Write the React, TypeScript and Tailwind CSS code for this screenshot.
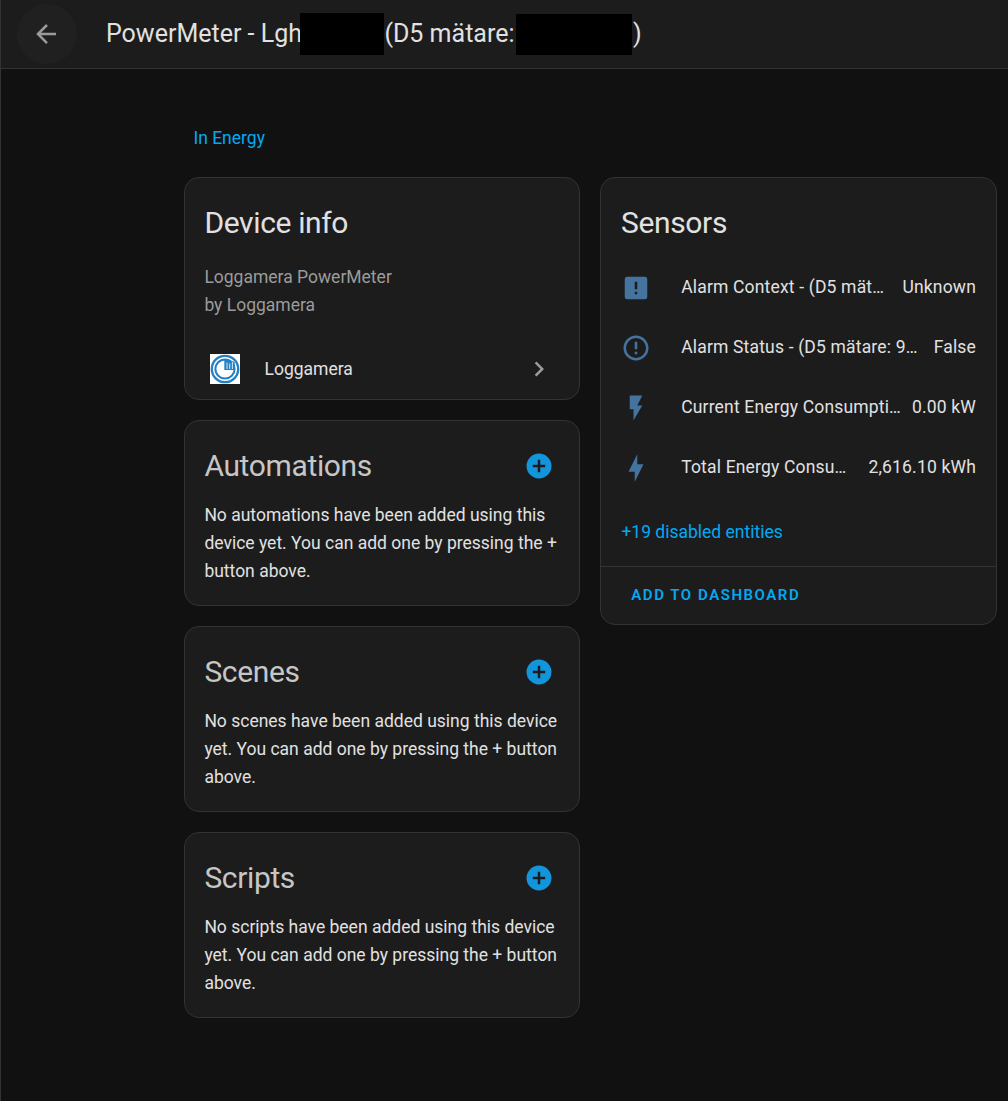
import type { ReactNode } from "react";

const icons = {
  back: "M20,11V13H8L13.5,18.5L12.08,19.92L4.16,12L12.08,4.08L13.5,5.5L8,11H20Z",
  chevron: "M8.59,16.58L13.17,12L8.59,7.41L10,6L16,12L10,18L8.59,16.58Z",
  plusCircle:
    "M17,13H13V17H11V13H7V11H11V7H13V11H17M12,2A10,10 0 0,0 2,12A10,10 0 0,0 12,22A10,10 0 0,0 22,12A10,10 0 0,0 12,2Z",
  alertBox:
    "M5,3H19A2,2 0 0,1 21,5V19A2,2 0 0,1 19,21H5A2,2 0 0,1 3,19V5A2,2 0 0,1 5,3M13,13V7H11V13H13M13,17V15H11V17H13Z",
  alertCircle:
    "M11,15H13V17H11V15M11,7H13V13H11V7M12,2C6.47,2 2,6.5 2,12A10,10 0 0,0 12,22A10,10 0 0,0 22,12A10,10 0 0,0 12,2M12,20A8,8 0 0,1 4,12A8,8 0 0,1 12,4A8,8 0 0,1 20,12A8,8 0 0,1 12,20Z",
  flash: "M7,2V13H10V22L17,10H13L17,2H7Z",
  bolt: "M11 15H6L13 1V9H18L11 23V15Z",
};

function Icon({ name, className }: { name: keyof typeof icons; className: string }) {
  return (
    <svg viewBox="0 0 24 24" className={`size-[30px] shrink-0 fill-current ${className}`}>
      <path d={icons[name]} />
    </svg>
  );
}

function LoggameraLogo() {
  return (
    <svg viewBox="0 0 30 30" className="size-[30px] shrink-0">
      <rect width="30" height="30" fill="#fff" />
      <circle cx="15" cy="15" r="13.2" fill="none" stroke="#2480c4" strokeWidth="2.3" />
      <circle cx="15" cy="15" r="9.6" fill="none" stroke="#2480c4" strokeWidth="2" />
      <path d="M14.3 5.2H17L24.6 8V16H14.3Z" fill="#2480c4" />
      <path d="M17 8.5V15M19.7 9.5V15M22.4 8V15" stroke="#d6e7f5" strokeWidth="1" />
    </svg>
  );
}

function Card({ children, className }: { children: ReactNode; className: string }) {
  return (
    <section className={`rounded-[15px] border border-[#333333] bg-[#1c1c1c] ${className}`}>
      {children}
    </section>
  );
}

function AddCard({ title, text }: { title: string; text: string }) {
  return (
    <Card className="h-[186px] pl-[19.4px] pr-5 pt-[25px]">
      <div className="flex h-10 items-center justify-between pr-[5px]">
        <h2 className="text-[30px] leading-10 tracking-[-0.012em] text-[#c6c6c6]">{title}</h2>
        <Icon name="plusCircle" className="text-[#1395db]" />
      </div>
      <p className="mt-[15px] text-[17.5px] leading-7">{text}</p>
    </Card>
  );
}

const sensors: { icon: keyof typeof icons; name: string; value: string }[] = [
  { icon: "alertBox", name: "Alarm Context - (D5 mät…", value: "Unknown" },
  { icon: "alertCircle", name: "Alarm Status - (D5 mätare: 9…", value: "False" },
  { icon: "flash", name: "Current Energy Consumpti…", value: "0.00 kW" },
  { icon: "bolt", name: "Total Energy Consu…", value: "2,616.10 kWh" },
];

export default function App() {
  return (
    <div className="h-[1101px] w-[1008px] overflow-hidden border-l border-[#333333] bg-[#111111] font-[Roboto,sans-serif] text-[#e1e1e1]">
      <header className="flex h-[69px] items-center border-b border-[#333333] bg-[#1c1c1c] pl-[15.5px]">
        <button className="flex size-[60px] items-center justify-center rounded-full bg-[#202020]">
          <Icon name="back" className="mr-[1.2px] text-[#9b9b9b]" />
        </button>
        <h1 className="ml-[29.5px] flex h-[69px] items-center whitespace-nowrap text-[25px] leading-[25px]">
          <span className="-mt-px w-[194px]">PowerMeter - Lgh</span>
          <span className="h-[42px] w-[84px] bg-black" />
          <span className="-mt-px w-[132px] pl-[0.4px]">(D5 mätare:</span>
          <span className="mt-px h-[41px] w-[116px] bg-black" />
          <span className="-mt-px pl-px">)</span>
        </h1>
      </header>

      <main className="pl-[183px]">
        <a className="ml-[9.4px] mt-[55px] block text-[17.5px] leading-7 text-[#03a9f4]">In Energy</a>
        <div className="mt-[25px] flex items-start gap-5">
          <div className="flex w-[396px] flex-col gap-5">
            <Card className="h-[223px] pl-[19.4px] pr-5 pt-[25px]">
              <h2 className="text-[30px] leading-10 tracking-[-0.012em]">Device info</h2>
              <p className="mt-5 text-[17.5px] leading-7 text-[#9b9b9b]">
                Loggamera PowerMeter
                <br />
                by Loggamera
              </p>
              <div className="mt-[35px] flex items-center pl-[5.6px] pr-[5px]">
                <LoggameraLogo />
                <span className="ml-[24.5px] flex-1 text-[17.5px] leading-7">Loggamera</span>
                <Icon name="chevron" className="text-[#9b9b9b]" />
              </div>
            </Card>
            <AddCard
              title="Automations"
              text="No automations have been added using this device yet. You can add one by pressing the + button above."
            />
            <AddCard
              title="Scenes"
              text="No scenes have been added using this device yet. You can add one by pressing the + button above."
            />
            <AddCard
              title="Scripts"
              text="No scripts have been added using this device yet. You can add one by pressing the + button above."
            />
          </div>

          <Card className="h-[448px] w-[397px]">
            <div className="h-[388px] px-5 pt-[25px]">
              <h2 className="text-[30px] leading-10 tracking-[-0.012em]">Sensors</h2>
              <ul className="mt-6 flex flex-col gap-5">
                {sensors.map((s) => (
                  <li key={s.name} className="flex h-10 items-center">
                    <Icon name={s.icon} className="mt-0.5 text-[#44739e]" />
                    <div className="ml-[30.2px] flex flex-1 justify-between whitespace-nowrap text-[17.5px] leading-7 tracking-[0.01em]">
                      <span>{s.name}</span>
                      <span>{s.value}</span>
                    </div>
                  </li>
                ))}
              </ul>
              <a className="mt-[31px] block pl-[0.4px] text-[17.5px] leading-7 text-[#03a9f4]">+19 disabled entities</a>
            </div>
            <div className="flex h-[58px] items-center border-t border-[#333333] pb-0.5 pl-[30.3px]">
              <button className="text-[15px] font-semibold leading-6 tracking-[0.102em] text-[#03a9f4]">
                ADD TO DASHBOARD
              </button>
            </div>
          </Card>
        </div>
      </main>
    </div>
  );
}
